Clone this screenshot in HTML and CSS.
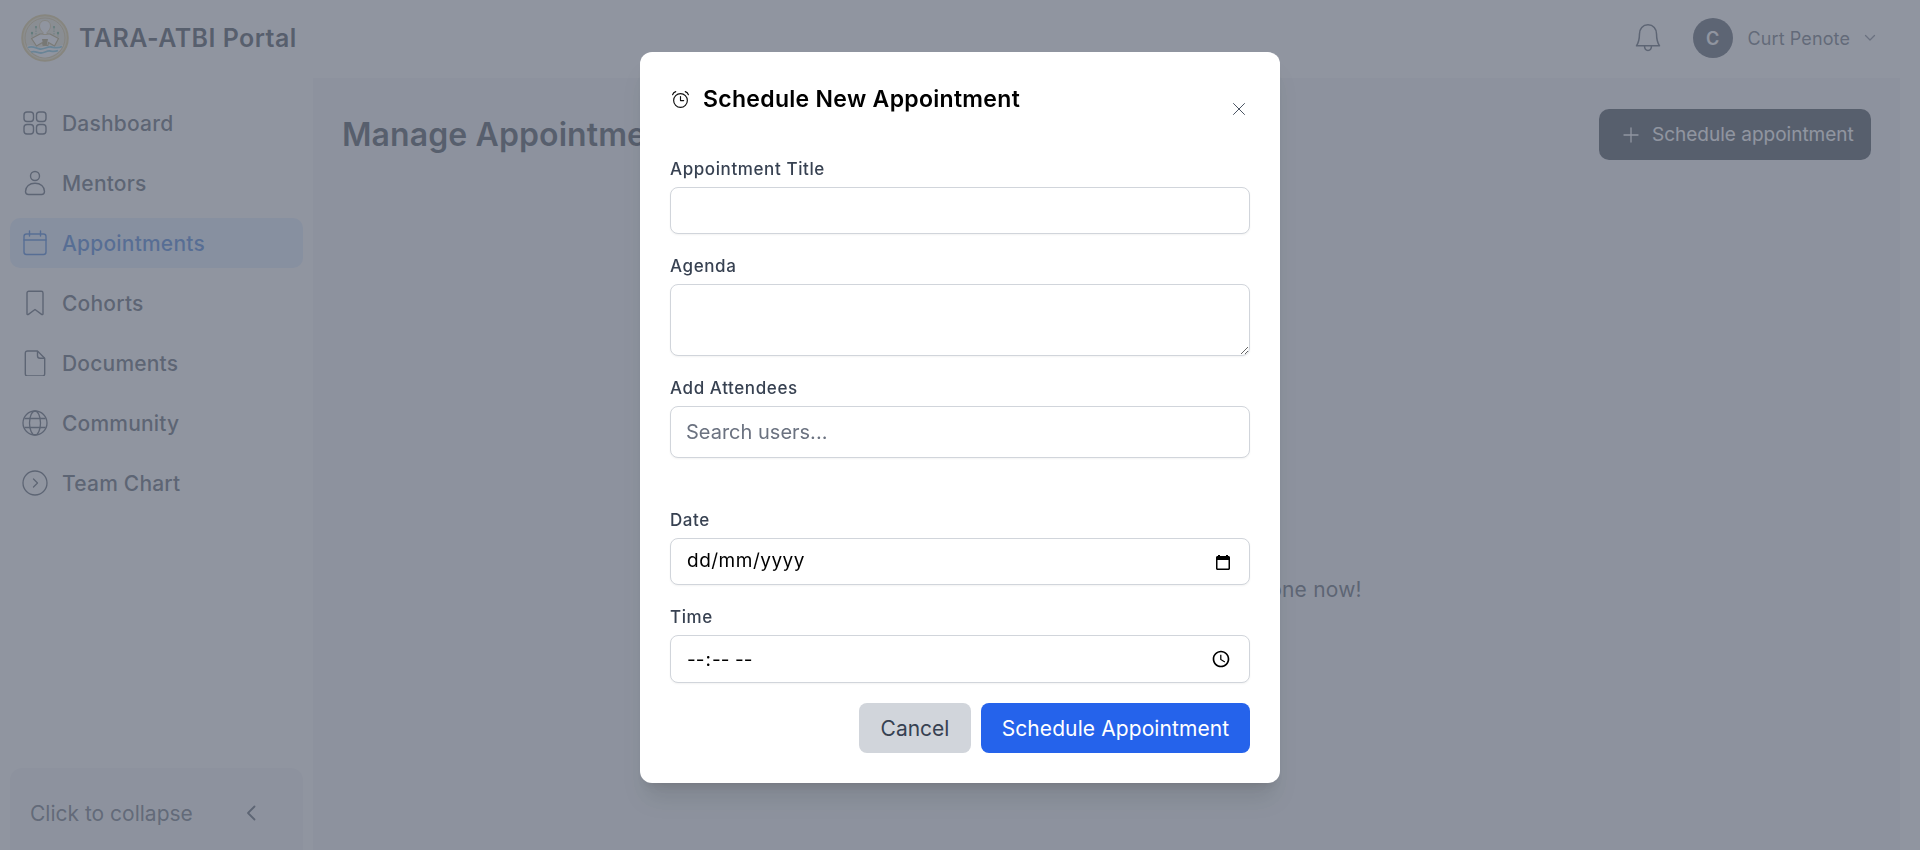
FILE: index.html
```html
<!DOCTYPE html>
<html lang="en-IN">
<head>
<meta charset="utf-8">
<title>TARA-ATBI Portal</title>
<link rel="stylesheet" href="styles.css">
</head>
<body>
<div class="app">
  <header class="topbar">
    <div class="brand">
      <svg class="logo" viewBox="0 0 48 48" fill="none">
        <circle cx="24" cy="24" r="22.8" fill="#eadfb8" stroke="#d9c27e" stroke-width="2"/>
        <circle cx="24" cy="24" r="20" fill="#e6e2cc" stroke="#c9b070" stroke-width=".8"/>
        <path d="M6 32c5-2 8 1 12 1.500s7-2.500 11-2 7 1.500 13-.5c-2 4-4 7-8 9-4 2.500-8 3.500-10 3.500-3 0-7-1-10-3.500C10 38 7 35 6 32z" fill="#fff"/>
        <path d="M7 33.500c5-2 8 1 12 1.500s7-2.500 11-2 7 1.500 11-.5M10 38c4-1.500 7 1 10 1s6-2.500 9-2 5 1 8-.5" stroke="#69bcd8" stroke-width="1.800"/>
        <path d="M10.500 24.500 19 20h10l8.500 4.500-4 7.500-6-3.500-.7 3h-4.600l-.7-3-6 3.500z" fill="#fff" stroke="#a8955a" stroke-width="1.200" stroke-linejoin="round"/>
        <path d="M21 25h6l-1.200 6h-3.600z" fill="#9b8a55"/>
        <path d="M24 6.500c3.300 0 5.500 2.300 5.500 5.500 0 3-2 5-3.500 6.500v2h-4v-2c-1.500-1.500-3.500-3.500-3.500-6.500 0-3.200 2.200-5.500 5.500-5.500z" fill="#fff" stroke="#c9b070" stroke-width=".8"/>
        <g fill="#4a9a6e"><circle cx="15" cy="13" r="1.100"/><circle cx="33" cy="13" r="1.100"/><circle cx="11" cy="19" r="1.200"/><circle cx="37" cy="19" r="1.200"/></g>
        <path d="M15 14v7M33 14v7M11 20v3M37 20v3" stroke="#6ea888" stroke-width=".9" stroke-dasharray="1.500 1"/>
      </svg>
      <span class="brand-name">TARA-ATBI Portal</span>
    </div>
    <div class="top-actions">
      <svg class="bell" viewBox="0 0 24 26" fill="none" stroke="#374151" stroke-width="1.300" stroke-linejoin="round" stroke-linecap="round">
        <path d="M12 1.500C7.400 1.500 4.600 5 4.600 9.500c0 5-.9 7.700-2.600 10.300h20c-1.700-2.600-2.600-5.300-2.600-10.300C19.400 5 16.600 1.500 12 1.500z"/>
        <path d="M9 20c0 2.500 1.300 3.800 3 3.800s3-1.300 3-3.800"/>
      </svg>
      <div class="avatar">C</div>
      <span class="user-name">Curt Penote</span>
      <svg class="caret" viewBox="0 0 12 8" fill="none" stroke="#6b7280" stroke-width="1.300" stroke-linecap="round" stroke-linejoin="round"><path d="M1.500 1.500 6 6l4.500-4.500"/></svg>
    </div>
  </header>
  <div class="body">
    <aside class="sidebar">
      <nav class="nav">
        <a class="nav-item">
          <svg class="nav-icon" viewBox="0 0 26 26" fill="none" stroke="currentColor" stroke-width="1.400"><rect x="2" y="2" width="9.500" height="9.500" rx="3"/><rect x="14.500" y="2" width="9.500" height="9.500" rx="3"/><rect x="2" y="14.500" width="9.500" height="9.500" rx="3"/><rect x="14.500" y="14.500" width="9.500" height="9.500" rx="3"/></svg>
          <span>Dashboard</span>
        </a>
        <a class="nav-item">
          <svg class="nav-icon" viewBox="0 0 26 26" fill="none" stroke="currentColor" stroke-width="1.400"><circle cx="13" cy="6" r="4.500"/><path d="M3.500 21.500c0-5 4-8.300 9.500-8.300s9.500 3.300 9.500 8.300c0 2-1.300 3-3 3h-13c-1.700 0-3-1-3-3z"/></svg>
          <span>Mentors</span>
        </a>
        <a class="nav-item active">
          <svg class="nav-icon" viewBox="0 0 26 26" fill="none" stroke="currentColor" stroke-width="1.400" stroke-linecap="round"><rect x="2" y="4" width="22" height="20.500" rx="2.500"/><path d="M2 10h22M7.500 1v5M18.500 1v5"/></svg>
          <span>Appointments</span>
        </a>
        <a class="nav-item">
          <svg class="nav-icon" viewBox="0 0 26 26" fill="none" stroke="currentColor" stroke-width="1.400" stroke-linejoin="round"><path d="M5 3c0-1 .8-1.700 1.700-1.700h12.600c.9 0 1.700.7 1.700 1.700v20.700c0 .8-.8 1.200-1.400.7L13 19.500l-6.600 4.900c-.6.500-1.400.1-1.400-.7z"/></svg>
          <span>Cohorts</span>
        </a>
        <a class="nav-item">
          <svg class="nav-icon" viewBox="0 0 26 26" fill="none" stroke="currentColor" stroke-width="1.400" stroke-linejoin="round"><path d="M15.500 1H5.500C4.200 1 3.300 1.900 3.300 3.200v20.600c0 1.300.9 2.200 2.200 2.200h15c1.300 0 2.200-.9 2.200-2.200V8.200z"/><path d="M15.500 1v4.700c0 1.400 1 2.500 2.500 2.500h4.700"/></svg>
          <span>Documents</span>
        </a>
        <a class="nav-item">
          <svg class="nav-icon" viewBox="0 0 26 26" fill="none" stroke="currentColor" stroke-width="1.300"><circle cx="13" cy="13" r="12"/><ellipse cx="13" cy="13" rx="5.500" ry="12"/><path d="M2.500 8.500h21M2.500 17.500h21"/></svg>
          <span>Community</span>
        </a>
        <a class="nav-item">
          <svg class="nav-icon" viewBox="0 0 26 26" fill="none" stroke="currentColor" stroke-width="1.300" stroke-linecap="round" stroke-linejoin="round"><circle cx="13" cy="13" r="12"/><path d="M11.500 9l4 4-4 4"/></svg>
          <span>Team Chart</span>
        </a>
      </nav>
      <div class="collapse">
        <span>Click to collapse</span>
        <svg class="collapse-icon" viewBox="0 0 12 18" fill="none" stroke="#374151" stroke-width="1.800" stroke-linecap="round" stroke-linejoin="round"><path d="M9.500 2.500 3 9l6.500 6.500"/></svg>
      </div>
    </aside>
    <main class="main">
      <div class="page-head">
        <h1 class="page-title">Manage Appointments</h1>
        <button class="primary-dark">
          <svg class="plus" viewBox="0 0 16 16" fill="none" stroke="currentColor" stroke-width="1.300" stroke-linecap="round"><path d="M8 1v14M1 8h14"/></svg>
          Schedule appointment
        </button>
      </div>
      <p class="empty">You have no appointments yet. Schedule one now!</p>
    </main>
  </div>
</div>

<div class="overlay">
  <section class="modal">
    <div class="modal-head">
      <h2 class="modal-title">
        <svg class="alarm" viewBox="0 0 18 18" fill="none" stroke="#111" stroke-width="1.100" stroke-linecap="round" stroke-linejoin="round"><circle cx="9" cy="10" r="6.500"/><path d="M9 6.200V10h3M1.500 4.500C2 3 3 2 4.500 1.500M16.500 4.500C16 3 15 2 13.500 1.500"/></svg>
        Schedule New Appointment
      </h2>
      <button class="close" aria-label="Close">
        <svg viewBox="0 0 14 14" fill="none" stroke="#4b5563" stroke-width="1" stroke-linecap="round"><path d="M1.500 1.500l11 11M12.500 1.500l-11 11"/></svg>
      </button>
    </div>
    <form class="form">
      <div class="field">
        <label class="label">Appointment Title</label>
        <input class="control h47" type="text">
      </div>
      <div class="field">
        <label class="label">Agenda</label>
        <textarea class="control area"></textarea>
      </div>
      <div class="field attendees">
        <label class="label">Add Attendees</label>
        <input class="control search" type="text" placeholder="Search users...">
      </div>
      <div class="field">
        <label class="label">Date</label>
        <div class="control h47 date-box">
          <input class="date-input" type="text" placeholder="dd/mm/yyyy">
          <svg class="date-icon" viewBox="0 0 14 16"><path fill="#000" d="M2 1h2v1h6V1h2v1h.5C13.300 2 14 2.700 14 3.500v11c0 .8-.7 1.500-1.500 1.500h-11C.7 16 0 15.300 0 14.500v-11C0 2.700.7 2 1.500 2H2zM1.500 6v8.500h11V6z"/></svg>
        </div>
      </div>
      <div class="field">
        <label class="label">Time</label>
        <input class="control h48 native" type="time">
      </div>
      <div class="actions">
        <button type="button" class="btn cancel">Cancel</button>
        <button type="button" class="btn submit">Schedule Appointment</button>
      </div>
    </form>
  </section>
</div>
</body>
</html>
```
FILE: styles.css
```css
* { box-sizing: border-box; }
html, body { margin: 0; height: 100%; overflow: hidden; }
body { font-family: Inter, "Noto Sans", sans-serif; color: #374151; background: #fff; }

.app { display: flex; flex-direction: column; height: 850px; }

.topbar { height: 78px; flex: none; display: flex; align-items: center; justify-content: space-between; padding: 0 44px 2px 21px; }
.brand { display: flex; align-items: center; gap: 10px; }
.logo { width: 48px; height: 48px; }
.brand-name { font-size: 25px; font-weight: 600; color: #1f2937; letter-spacing: .45px; }
.top-actions { display: flex; align-items: center; }
.bell { width: 28px; height: 30px; margin-right: 31px; }
.avatar { width: 40px; height: 40px; border-radius: 50%; background: #374151; color: #fff; display: flex; align-items: center; justify-content: center; font-size: 18px; font-weight: 600; margin-right: 15px; }
.user-name { font-size: 18px; color: #4b5563; letter-spacing: .1px; }
.caret { width: 12px; height: 8px; margin-left: 14px; }

.body { flex: 1; display: flex; min-height: 0; }
.sidebar { width: 313px; flex: none; display: flex; flex-direction: column; }
.nav { display: flex; flex-direction: column; gap: 10px; padding: 20px 10px 0; }
.nav-item { height: 50px; display: flex; align-items: center; gap: 14px; padding-left: 12px; border-radius: 10px; color: #374151; font-size: 21px; font-weight: 500; letter-spacing: .2px; }
.nav-item.active { background: #dbeafe; color: #1e66d0; }
.nav-icon { width: 26px; height: 26px; flex: none; }
.collapse { margin: auto 10px 0; height: 82px; background: #f3f4f6; border-radius: 12px 12px 0 0; display: flex; align-items: center; justify-content: space-between; padding: 8px 46px 0 20px; font-size: 21px; color: #4b5563; }
.collapse-icon { width: 12px; height: 18px; }

.main { flex: 1; margin-right: 20px; background: #f3f4f6; padding: 31px 29px 0 29px; }
.page-head { display: flex; align-items: center; justify-content: space-between; }
.page-title { margin: 0 0 1px; font-size: 32px; font-weight: 600; color: #1f2937; letter-spacing: .1px; }
.primary-dark { height: 51px; width: 272px; display: flex; align-items: center; gap: 13px; padding-left: 24px; border: 0; border-radius: 10px; background: #1f2937; color: #fff; font: 400 19px Inter, sans-serif; }
.plus { width: 16px; height: 16px; }
.empty { margin: 417px 0 0; text-align: center; font-size: 21px; letter-spacing: .2px; color: #374151; }

.overlay { position: fixed; inset: 0; background: rgba(107, 114, 128, .75); display: flex; justify-content: center; align-items: flex-start; padding-top: 52px; }
.modal { width: 640px; height: 731px; background: #fff; border-radius: 12px; padding: 30px; box-shadow: 0 20px 25px -5px rgba(0,0,0,.1), 0 8px 10px -6px rgba(0,0,0,.1); }
.modal-head { display: flex; justify-content: space-between; align-items: flex-start; height: 75px; }
.modal-title { margin: 0; display: flex; align-items: center; gap: 13px; height: 34px; font-size: 23px; font-weight: 600; letter-spacing: .3px; color: #000; }
.alarm { width: 19px; height: 19px; margin-left: 1px; }
.close { width: 20px; height: 20px; margin: 17px 1px 0 0; padding: 3px; border: 0; background: none; }
.close svg { display: block; width: 14px; height: 14px; }

.form { display: flex; flex-direction: column; gap: 20px; }
.field { display: flex; flex-direction: column; }
.attendees { margin-bottom: 30px; }
.label { font-size: 17px; line-height: 24px; font-weight: 500; letter-spacing: .6px; color: #374151; margin-bottom: 6px; }
.control { width: 100%; border: 1px solid #d1d5db; border-radius: 8px; background: #fff; box-shadow: 0 1px 2px rgba(0,0,0,.05); padding: 0 15px; font: 400 18px Inter, sans-serif; color: #000; }
.h47 { height: 47px; }
.h48 { height: 48px; }
.area { height: 72px; display: block; padding: 8px 15px; resize: vertical; }
.search { height: 52px; font-size: 20px; }
.search::placeholder { color: #6b7280; opacity: 1; }
.date-box { display: flex; align-items: center; padding-right: 19px; }
.date-input { flex: 1; min-width: 0; border: 0; outline: 0; padding: 0 0 2px 1px; background: none; font: 400 19px Inter, sans-serif; letter-spacing: .5px; }
.date-input::placeholder { color: #000; opacity: 1; }
.date-icon { width: 14px; height: 16px; flex: none; }
.native { font-size: 19px; letter-spacing: 2.2px; }
.actions { display: flex; justify-content: flex-end; gap: 10px; }
.btn { height: 50px; border: 0; border-radius: 8px; font: 400 21px Inter, sans-serif; }
.cancel { width: 112px; background: #d1d5db; color: #374151; }
.submit { width: 269px; background: #2563eb; color: #fff; letter-spacing: .1px; }
```
